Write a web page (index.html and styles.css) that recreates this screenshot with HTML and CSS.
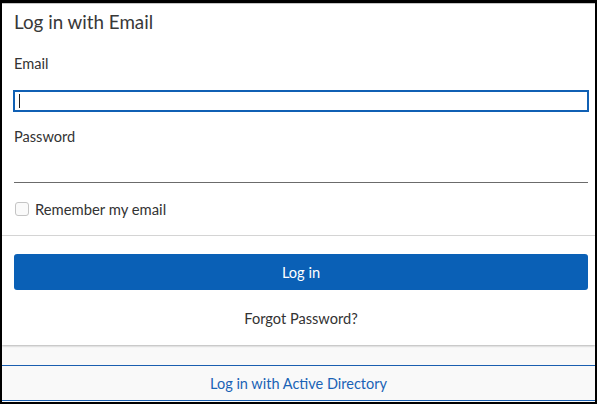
FILE: index.html
```html
<!DOCTYPE html>
<html lang="en">
<head>
<meta charset="utf-8">
<title>Log in with Email</title>
<link rel="stylesheet" href="styles.css">
</head>
<body>
<div class="frame">
  <div class="panel">
    <form class="form-section">
      <h1 class="title">Log in with Email</h1>
      <label class="label label-email" for="email">Email</label>
      <div class="email-field">
        <input class="input input-email" id="email" type="email" value="">
        <span class="caret"></span>
      </div>
      <label class="label label-password" for="password">Password</label>
      <input class="input input-password" id="password" type="password" value="">
      <label class="remember">
        <span class="checkbox"></span>
        <span class="remember-text">Remember my email</span>
      </label>
    </form>
    <div class="actions">
      <button class="login-btn" type="button">Log in</button>
      <a class="forgot" href="#">Forgot Password?</a>
    </div>
  </div>
  <a class="ad-link" href="#">Log in with Active Directory</a>
</div>
</body>
</html>
```

FILE: styles.css
```css
* { box-sizing: border-box; }
html, body { margin: 0; padding: 0; }
body {
  background: #000;
  width: 597px;
  height: 404px;
  overflow: hidden;
  font-family: "Lato", "Open Sans", sans-serif;
  color: #333;
}
.frame {
  margin: 3px 2px 0 2px;
  height: 399px;
  background: #f9f9f9;
  border-top: 1px solid #c9c9c9;
  display: flex;
  flex-direction: column;
}
.panel {
  background: #fff;
  box-shadow: 0 1px 2px rgba(0,0,0,0.28);
}
.form-section {
  display: flex;
  flex-direction: column;
  padding: 7px 7px 16px 12px;
  margin: 0;
}
.title {
  margin: 0;
  font-size: 18.8px;
  line-height: 22px;
  font-weight: 400;
  color: #383838;
}
.label {
  font-size: 14.6px;
  line-height: 20px;
  color: #333;
}
.label-email { margin-top: 21px; line-height: 19px; }
.email-field {
  position: relative;
  margin-top: 17px;
  margin-left: -1px;
  margin-right: -1px;
}
.input {
  display: block;
  width: 100%;
  font: inherit;
  outline: none;
  background: #fff;
}
.input-email {
  height: 22px;
  border: 2px solid #1060b4;
  border-radius: 0;
  padding: 0 4px;
}
.caret {
  position: absolute;
  left: 6px;
  top: 4px;
  width: 1px;
  height: 14px;
  background: #222;
}
.label-password { margin-top: 15px; line-height: 19px; }
.input-password {
  margin-top: 10px;
  height: 27px;
  border: none;
  border-bottom: 1px solid #6b6b6b;
  padding: 0;
}
.remember {
  margin-top: 16px;
  display: flex;
  align-items: center;
  height: 20px;
  font-size: 14.8px;
}
.checkbox {
  width: 14px;
  height: 14px;
  margin-left: 1px;
  border: 1px solid #c4c4c4;
  border-radius: 3px;
  background: #fafafa;
}
.remember-text { margin-left: 6px; color: #333; }
.actions {
  border-top: 1px solid #d4d4d4;
  padding: 18px 7px 16px 12px;
  display: flex;
  flex-direction: column;
  align-items: center;
}
.login-btn {
  width: 100%;
  height: 36px;
  border: none;
  border-radius: 3px;
  background: #0a60b6;
  color: #fff;
  font: inherit;
  font-size: 14.6px;
}
.forgot {
  margin-top: 19px;
  font-size: 14.6px;
  line-height: 20px;
  color: #333;
  text-decoration: none;
}
.ad-link {
  margin-top: 20px;
  height: 36px;
  border-top: 1px solid #1a5fb0;
  border-bottom: 1px solid #1a5fb0;
  display: flex;
  align-items: center;
  justify-content: center;
  font-size: 14.5px;
  color: #1a63b6;
  text-decoration: none;
}
```
